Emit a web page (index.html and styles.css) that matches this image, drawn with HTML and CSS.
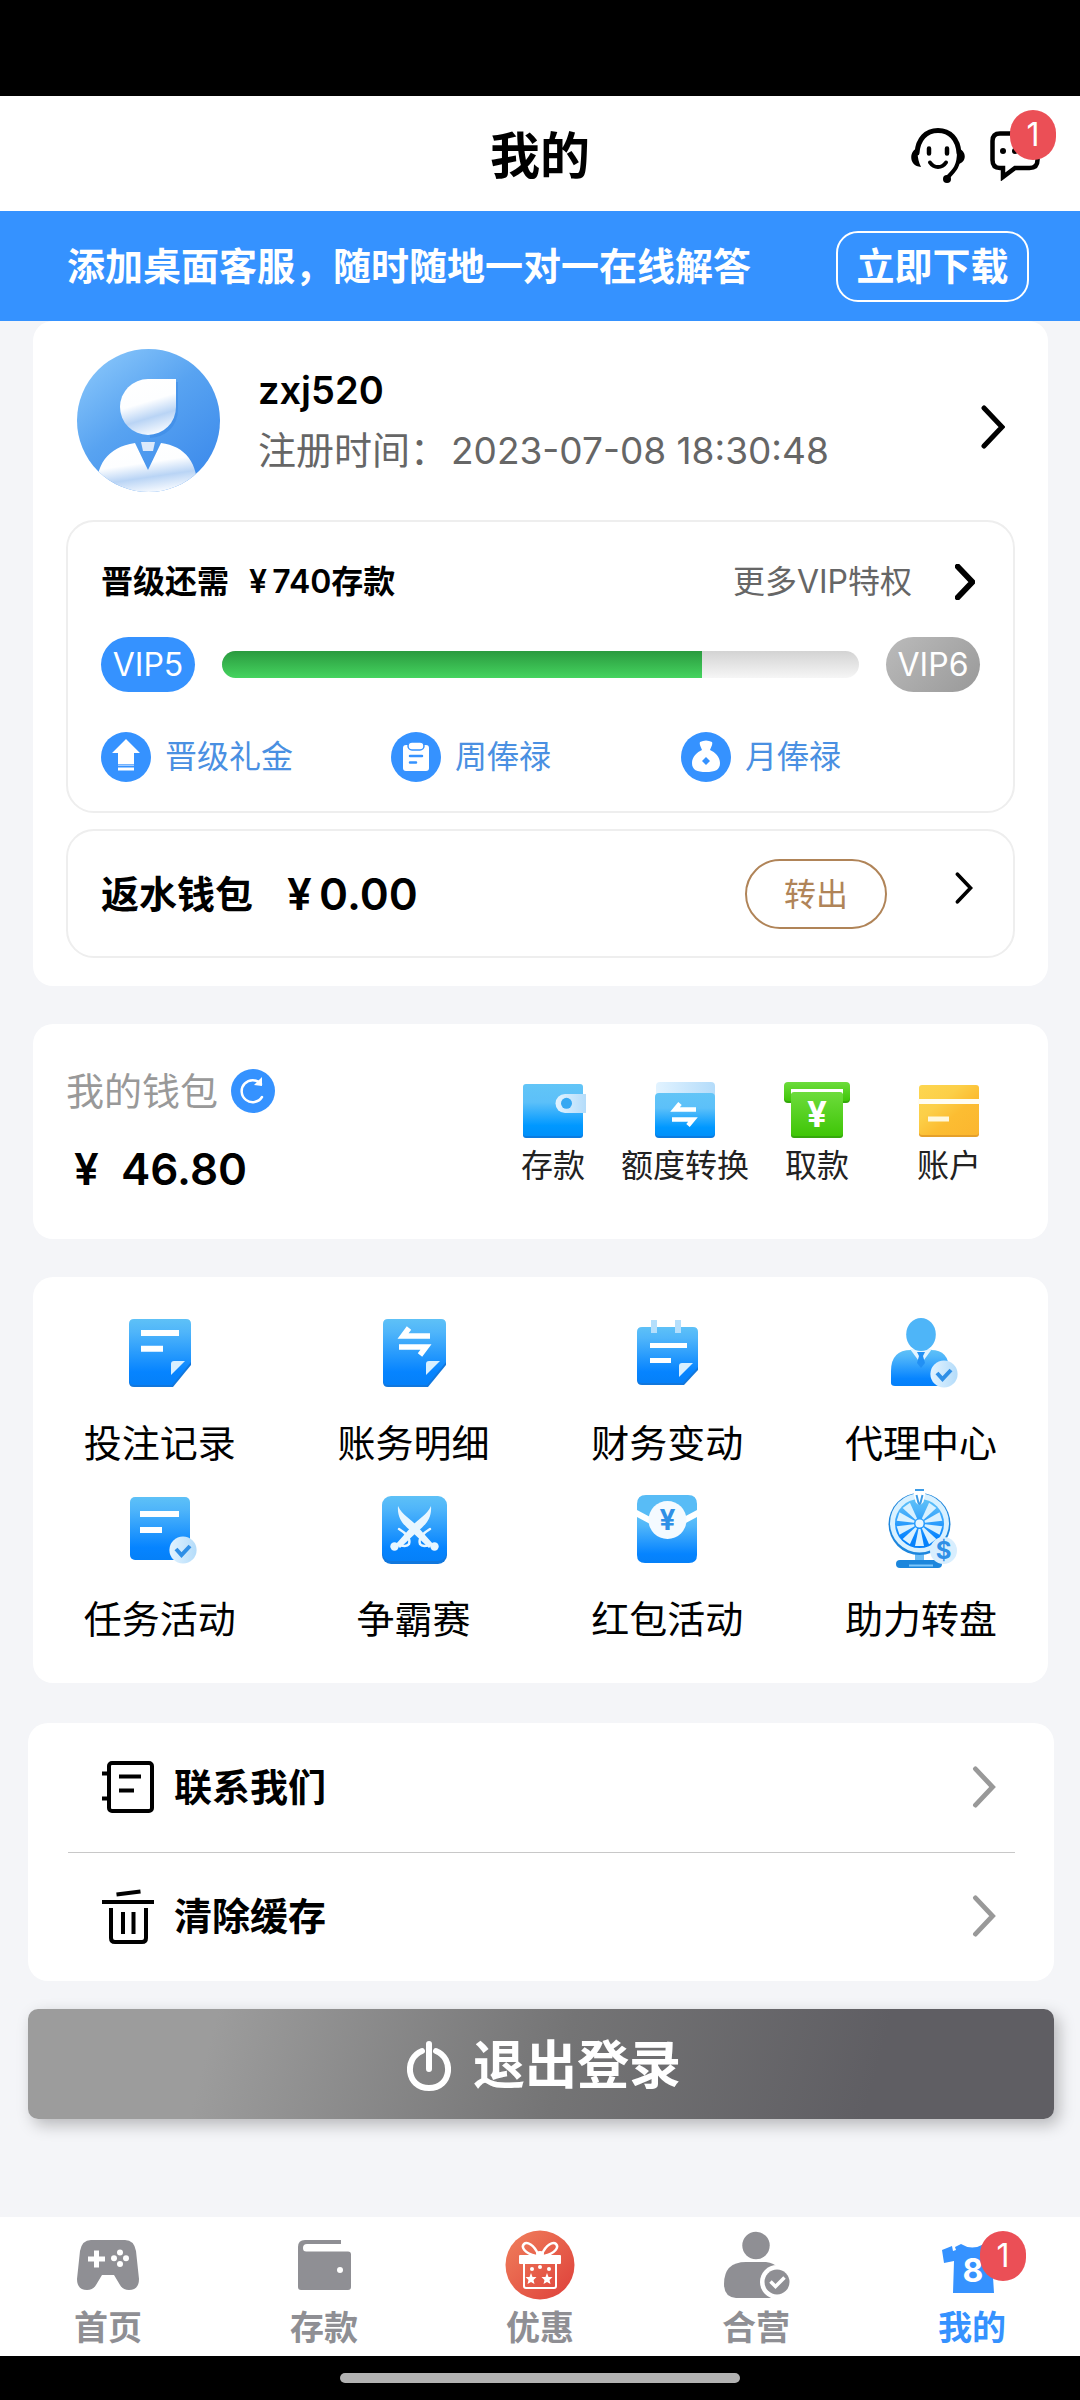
FILE: index.html
```html
<!DOCTYPE html>
<html lang="zh-CN">
  <head>
    <meta charset="UTF-8" />
    <meta name="viewport" content="width=device-width, initial-scale=1" />
    <title>我的</title>
    <link rel="stylesheet" href="styles.css">
  </head>
  <body>
    <!-- shared gradients and symbols -->
    <svg class="defs" width="0" height="0" aria-hidden="true">
      <defs>
        <linearGradient id="blue" x1="0" y1="0" x2="0" y2="1">
          <stop offset="0" stop-color="#5ec1f7" />
          <stop offset="0.2" stop-color="#4fb5fa" />
          <stop offset="0.8" stop-color="#0684ff" />
          <stop offset="1" stop-color="#0580f8" />
        </linearGradient>
        <linearGradient id="sky" x1="0" y1="0" x2="0" y2="1">
          <stop offset="0" stop-color="#62c5f7" />
          <stop offset="0.35" stop-color="#5cc0f9" />
          <stop offset="0.8" stop-color="#0098ff" />
          <stop offset="1" stop-color="#0090fa" />
        </linearGradient>
        <linearGradient id="pale" x1="0" y1="0" x2="1" y2="0">
          <stop offset="0" stop-color="#e2f3ff" />
          <stop offset="1" stop-color="#b4dcfa" />
        </linearGradient>
        <linearGradient id="edge" x1="0" y1="0" x2="1" y2="0">
          <stop offset="0" stop-color="#0a6fd0" />
          <stop offset="0.55" stop-color="#7cc6fb" />
          <stop offset="1" stop-color="#0a6fd0" />
        </linearGradient>
        <linearGradient id="green" x1="0" y1="0" x2="0" y2="1">
          <stop offset="0" stop-color="#6ddc3c" />
          <stop offset="1" stop-color="#3fc607" />
        </linearGradient>
        <linearGradient id="gold" x1="0" y1="0" x2="1" y2="1">
          <stop offset="0" stop-color="#fdd650" />
          <stop offset="0.35" stop-color="#fccf48" />
          <stop offset="0.6" stop-color="#fcbd32" />
          <stop offset="1" stop-color="#fbb62f" />
        </linearGradient>
        <linearGradient id="avatar-bg" x1="0.1" y1="0" x2="0.8" y2="0.9">
          <stop offset="0" stop-color="#8bc8fb" />
          <stop offset="0.5" stop-color="#58a3f1" />
          <stop offset="1" stop-color="#3f8dec" />
        </linearGradient>
        <linearGradient id="shine" x1="0.3" y1="0" x2="0.6" y2="1">
          <stop offset="0" stop-color="#fff" />
          <stop offset="0.42" stop-color="#fdfeff" />
          <stop offset="0.7" stop-color="#b9d4f5" />
          <stop offset="1" stop-color="#f8fbff" />
        </linearGradient>
        <linearGradient id="red" x1="0" y1="0" x2="1" y2="1">
          <stop offset="0" stop-color="#f0805c" />
          <stop offset="1" stop-color="#de3f3a" />
        </linearGradient>
        <symbol id="chevron" viewBox="0 0 24 44">
          <path d="M3 3 21 22 3 41" fill="none" stroke="currentColor" stroke-linecap="round" stroke-linejoin="miter" />
        </symbol>
        <symbol id="tick" viewBox="0 0 28 28">
          <circle cx="14" cy="14" r="13.6" fill="url(#pale)" />
          <path d="m7 13 5.500 6 8.500-9" fill="none" stroke="#2f8fe6" stroke-width="4" />
        </symbol>
      </defs>
    </svg>

    <div class="status-bar"></div>

    <header class="top-bar">
      <h1>我的</h1>
      <div class="top-actions">
        <button class="icon-btn" aria-label="客服">
          <svg width="56" height="56" viewBox="0 0 56 56" fill="none" stroke="#000" stroke-linecap="round">
            <path d="M7 25C8 11 16 2.500 28 2.500S48 11 49 25" stroke-width="5" />
            <path d="M49 24c0 14-4 18-12 26" stroke-width="4" />
            <path d="M8 20C-1 22-2 38 11 39 8 33 7 27 8 20ZM48 20c9 3 9 14 0 16Z" fill="#000" stroke="none" />
            <circle cx="37" cy="51" r="4" fill="#000" stroke="none" />
            <path d="M19 20.500v5M37 20.500v5" stroke-width="4.500" />
            <path d="M20 34.500c4 6 12 6 16 0" stroke-width="4" />
          </svg>
        </button>
        <button class="icon-btn has-badge" aria-label="消息">
          <svg width="50" height="50" viewBox="0 0 50 50">
            <path d="M10 2.500h30q7.500 0 7.500 7.500v19q0 8-8 8H25l-12 9v-9h-3q-7.500 0-7.500-8V10q0-7.500 7.500-7.500Z" fill="none" stroke="#000" stroke-width="4.500" />
            <circle cx="13" cy="20" r="3" /><circle cx="25" cy="20" r="3" /><circle cx="37" cy="20" r="3" />
          </svg>
          <span class="badge">1</span>
        </button>
      </div>
    </header>

    <div class="banner">
      <p>添加桌面客服，随时随地一对一在线解答</p>
      <button class="download-btn">立即下载</button>
    </div>

    <main>
      <section class="card profile-card">
        <a class="profile" href="#">
          <svg class="avatar" viewBox="0 0 143 143">
            <defs><clipPath id="avatar-clip"><circle cx="71.500" cy="71.500" r="71.500" /></clipPath></defs>
            <g clip-path="url(#avatar-clip)">
              <rect width="143" height="143" fill="url(#avatar-bg)" />
              <path d="M73 33h28v28a28 28 0 0 1-28 28" fill="#2f7fe0" opacity=".35" />
              <path d="M71 30h28v28a28 28 0 1 1-28-28Z" fill="url(#shine)" />
              <path d="M20 143c-2-26 10-45 38-49l13 27 13-27c24 3 38 20 36 49Z" fill="url(#shine)" />
              <path d="M64 93h14l-2 9H66Z" fill="#dbe9fb" />
            </g>
          </svg>
          <div class="profile-text">
            <strong>zxj520</strong>
            <span>注册时间：<span class="date">2023-07-08 18:30:48</span></span>
          </div>
          <svg class="chevron chevron-lg"><use href="#chevron" /></svg>
        </a>

        <div class="panel vip">
          <div class="vip-head">
            <strong>晋级还需</strong>
            <strong>¥&thinsp;740存款</strong>
            <a href="#">更多VIP特权</a>
            <svg class="chevron chevron-bold"><use href="#chevron" /></svg>
          </div>
          <div class="vip-level">
            <span class="level">VIP5</span>
            <div class="track"><div class="fill" style="width: 75.4%"></div></div>
            <span class="level level-next">VIP6</span>
          </div>
          <div class="vip-links">
            <a href="#">
              <svg width="50" height="50" viewBox="0 0 50 50">
                <circle cx="25" cy="25" r="25" fill="#3592ff" />
                <path d="m25 7 14 14h-6v11H17V21h-6ZM17 35.500h16v3H17Z" fill="#fff" />
                <path d="M17 33.200h16" stroke="#a9d0ff" stroke-width="1.500" />
              </svg>
              晋级礼金
            </a>
            <a href="#">
              <svg width="50" height="50" viewBox="0 0 50 50">
                <circle cx="25" cy="25" r="25" fill="#3592ff" />
                <rect x="12" y="13" width="26" height="26" rx="3" fill="#fff" />
                <rect x="17" y="10" width="16" height="8" rx="4" fill="#fff" stroke="#3592ff" stroke-width="1.500" />
                <path d="M19 24h12M19 30.500h6" stroke="#3592ff" stroke-width="2.500" stroke-linecap="round" />
              </svg>
              周俸禄
            </a>
            <a href="#">
              <svg width="50" height="50" viewBox="0 0 50 50">
                <circle cx="25" cy="25" r="25" fill="#3592ff" />
                <path d="M19 10c4-2 8-2 12 0 1 3-1 5-2 8 5 2 10 7 10 13 0 7-5 9-14 9s-14-2-14-9c0-6 5-11 10-13-1-3-3-5-2-8Z" fill="#fff" />
                <path d="m25 25 4 4-4 4-4-4Z" fill="#3592ff" />
              </svg>
              月俸禄
            </a>
          </div>
        </div>

        <div class="panel rebate">
          <strong>返水钱包</strong>
          <strong class="money">¥&thinsp;0.00</strong>
          <button class="transfer-btn">转出</button>
          <svg class="chevron chevron-sm"><use href="#chevron" /></svg>
        </div>
      </section>

      <section class="card wallet">
        <div class="wallet-info">
          <div class="wallet-title">
            我的钱包
            <button class="icon-btn" aria-label="刷新">
              <svg width="44" height="44" viewBox="0 0 44 44">
                <circle cx="22" cy="22" r="22" fill="#3592ff" />
                <path d="M31 28a11 11 0 1 1-1-13" fill="none" stroke="#fff" stroke-width="2.500" stroke-linecap="round" />
                <path d="M31 8v9l-8-1Z" fill="#fff" />
              </svg>
            </button>
          </div>
          <strong class="money">¥&nbsp; 46.80</strong>
        </div>
        <nav class="wallet-actions">
          <a href="#">
            <svg width="66" height="60" viewBox="0 0 66 60">
              <rect x="3" y="8" width="60" height="50" rx="3" fill="#0a7be0" />
              <path d="M6 57.300h54" stroke="url(#edge)" stroke-width="2" />
              <rect x="3" y="4" width="60" height="52" rx="3" fill="url(#sky)" />
              <path d="M66 14v19H45a9.500 9.500 0 0 1 0-19Z" fill="url(#pale)" />
              <circle cx="46.500" cy="23.300" r="5.500" fill="#36a8f2" />
            </svg>
            存款
          </a>
          <a href="#">
            <svg width="66" height="60" viewBox="0 0 66 60">
              <rect x="4" y="2" width="59" height="20" rx="4" fill="url(#pale)" />
              <rect x="3" y="20" width="60" height="38" rx="4" fill="#0a7be0" />
              <rect x="3" y="13" width="60" height="43" rx="4" fill="url(#sky)" />
              <path d="M44 29.500H23l5-6M20 39.500h21l-5 6" fill="none" stroke="#fff" stroke-width="4.500" />
            </svg>
            额度转换
          </a>
          <a href="#">
            <svg width="66" height="60" viewBox="0 0 66 60">
              <rect x="0" y="4" width="66" height="19" rx="4" fill="#35a80b" />
              <rect x="0" y="2" width="66" height="19" rx="4" fill="url(#green)" />
              <path d="M7 9h52v5H7Z" fill="#fff" />
              <rect x="7" y="20" width="52" height="38" rx="3" fill="#35a80b" />
              <rect x="7" y="12" width="52" height="44" rx="3" fill="url(#green)" />
              <text x="33" y="47" class="icon-text" font-size="35">¥</text>
            </svg>
            取款
          </a>
          <a href="#">
            <svg width="66" height="60" viewBox="0 0 66 60">
              <rect x="3" y="10" width="60" height="47" rx="3" fill="#e5a02a" />
              <rect x="3" y="5" width="60" height="50" rx="3" fill="url(#gold)" />
              <path d="M2 19h62v5H2Z" fill="#fffdf2" />
              <path d="M12 36.500h21v5H12Z" fill="#fff8dc" />
            </svg>
            账户
          </a>
        </nav>
      </section>

      <nav class="card features">
        <a href="#">
          <svg viewBox="0 0 80 80">
            <path d="M9 20h62v33L53 75H14q-5 0-5-5Z" fill="#1177dd" />
            <path d="M14 7h52q5 0 5 5v38L52 73H14q-5 0-5-5V12q0-5 5-5Z" fill="url(#blue)" />
            <path d="M14 73.800h38" stroke="url(#edge)" stroke-width="2" />
            <path d="M21 21h38M21 36.800h22" stroke="#fff" stroke-width="6" />
            <path d="M54 49h11L51 63V52q0-3 3-3Z" fill="#d9f0ff" />
          </svg>
          投注记录
        </a>
        <a href="#">
          <svg viewBox="0 0 80 80">
            <path d="M9 20h63v33L54 75H14q-5 0-5-5Z" fill="#1177dd" />
            <path d="M14 7h53q5 0 5 5v38L53 73H14q-5 0-5-5V12q0-5 5-5Z" fill="url(#blue)" />
            <path d="M14 73.800h38" stroke="url(#edge)" stroke-width="2" />
            <path d="M56 24H29l6-8M25 35h27l-6 8" fill="none" stroke="#fff" stroke-width="5.500" />
            <path d="M55 49h11L52 63V52q0-3 3-3Z" fill="#d9f0ff" />
          </svg>
          账务明细
        </a>
        <a href="#">
          <svg viewBox="0 0 80 80">
            <path d="M10 25h61v33L57 73H15q-5 0-5-5Z" fill="#1177dd" />
            <path d="M15 15h51q5 0 5 5v35L56 71H15q-5 0-5-5V20q0-5 5-5Z" fill="url(#blue)" />
            <path d="M15 71.800h41" stroke="url(#edge)" stroke-width="2" />
            <path d="M24 8h6v13h-6ZM48 8h6v13h-6Z" fill="#b5dffc" />
            <path d="M23 33.500h37M23 48.500h21" stroke="#fff" stroke-width="5" />
            <path d="M55 51h11L52 65V54q0-3 3-3Z" fill="#d9f0ff" />
          </svg>
          财务变动
        </a>
        <a href="#">
          <svg viewBox="0 0 80 80">
            <path d="M10 71V59q0-21 20-21h20q18 0 18 20v16H14q-4 0-4-3Z" fill="url(#blue)" />
            <path d="M14 73h38" stroke="url(#edge)" stroke-width="2" />
            <path d="m29 37 11 15 11-15Z" fill="#e4f4ff" />
            <path d="M36 40h8l-2 4 2 7-4 5-4-5 2-7Z" fill="#2290f4" />
            <ellipse cx="40" cy="22.500" rx="14.800" ry="16.500" fill="#4eb5f8" />
            <use href="#tick" x="49" y="48" width="28" height="28" />
          </svg>
          代理中心
        </a>
        <a href="#">
          <svg viewBox="0 0 80 80">
            <rect x="10" y="9" width="60" height="63" rx="5" fill="url(#blue)" />
            <path d="M14 71.500h40" stroke="url(#edge)" stroke-width="2" />
            <path d="M20 26h39M20 42h22" stroke="#fff" stroke-width="6" />
            <use href="#tick" x="49" y="48" width="28" height="28" />
          </svg>
          任务活动
        </a>
        <a href="#">
          <svg viewBox="0 0 80 80">
            <rect x="8" y="12" width="65" height="64" rx="9" fill="#1177dd" />
            <rect x="8" y="8" width="65" height="65" rx="9" fill="url(#blue)" />
            <path d="M18 74.800h45" stroke="url(#edge)" stroke-width="2" />
            <g fill="#e8f6ff">
              <path d="M24 18c-1 13 6 19 13 25l18 17 4-4-16-18C37 31 28 27 24 18Z" />
              <path d="M57 18c1 13-6 19-13 25L26 60l-4-4 16-18c6-7 15-11 19-20Z" />
              <circle cx="20.500" cy="58.500" r="4.200" /><circle cx="60.500" cy="58.500" r="4.200" />
              <path d="M25 41c7 4 12 10 10 15-2 3-6 2-9 1M56 41c-7 4-12 10-10 15 2 3 6 2 9 1" fill="none" stroke="#e8f6ff" stroke-width="2.500" stroke-linecap="round" />
            </g>
          </svg>
          争霸赛
        </a>
        <a href="#">
          <svg viewBox="0 0 80 80">
            <path d="M19 7h42q9 0 9 9v6L40 38 10 22v-6q0-9 9-9Z" fill="#58bcf6" />
            <path d="m10 29 30 16 30-16v38q0 8-8 8H18q-8 0-8-8Z" fill="url(#blue)" />
            <path d="M20 74h40" stroke="url(#edge)" stroke-width="2" />
            <circle cx="40.500" cy="32" r="19" fill="#f4faff" />
            <text x="40.500" y="42" class="icon-text icon-text-blue" font-size="28">¥</text>
          </svg>
          红包活动
        </a>
        <a href="#">
          <svg viewBox="0 0 80 80">
            <path d="M34 66h9v8h-9Z" fill="#6dbdf5" />
            <rect x="15" y="72" width="46" height="8" rx="4" fill="#1c86dc" />
            <path d="M28 77.500h24" stroke="#7cc6fb" stroke-width="2" />
            <circle cx="38.500" cy="36" r="31" fill="#1d86dd" />
            <circle cx="38.500" cy="35" r="29.500" fill="#d9f1ff" />
            <circle cx="38.500" cy="35.500" r="24.500" fill="url(#blue)" />
            <!-- wheel wedges -->
            <g fill="#d9f1ff">
              <path id="wedge" d="m37.500 41-3.500 17h9l-3.500-17Z" />
              <use href="#wedge" transform="rotate(36 38.500 35.500)" />
              <use href="#wedge" transform="rotate(72 38.500 35.500)" />
              <use href="#wedge" transform="rotate(108 38.500 35.500)" />
              <use href="#wedge" transform="rotate(144 38.500 35.500)" />
              <use href="#wedge" transform="rotate(216 38.500 35.500)" />
              <use href="#wedge" transform="rotate(252 38.500 35.500)" />
              <use href="#wedge" transform="rotate(288 38.500 35.500)" />
              <use href="#wedge" transform="rotate(324 38.500 35.500)" />
            </g>
            <circle cx="38.500" cy="35.500" r="4" fill="#e8f6ff" />
            <path d="M32 2h13l-2.500 12q-4 6-8 0Z" fill="#fff" />
            <path d="M34 2h9M35.500 7l2 8q1 2 2 0l2-8" fill="none" stroke="#3c9be6" stroke-width="2" />
            <circle cx="62.500" cy="62.500" r="13.500" fill="#d8eefe" />
            <text x="62.500" y="71" class="icon-text icon-text-blue" font-size="24">$</text>
          </svg>
          助力转盘
        </a>
      </nav>

      <nav class="card menu">
        <a href="#">
          <svg width="52" height="52" viewBox="0 0 52 52" fill="none" stroke="#000" stroke-width="4">
            <rect x="7" y="2" width="43" height="48" rx="3" />
            <path d="M0 12.500h7M0 37.500h7M17 15.500h22M17 29.500h15" />
          </svg>
          联系我们
          <svg class="chevron chevron-md"><use href="#chevron" /></svg>
        </a>
        <a href="#">
          <svg width="52" height="56" viewBox="0 0 52 56" fill="none" stroke="#000" stroke-width="4">
            <path d="M0 14h52M14.500 6.500l24-3M9 20v30q0 4 4 4h27q4 0 4-4V20M21 24v22M31.500 24v22" />
          </svg>
          清除缓存
          <svg class="chevron chevron-md"><use href="#chevron" /></svg>
        </a>
      </nav>

      <button class="logout-btn">
        <svg width="44" height="50" viewBox="0 0 44 50" fill="none" stroke="#fff" stroke-width="6" stroke-linecap="round">
          <path d="M15 10C-3 17-1 47 22 47S47 17 29 10M22 3v25" />
        </svg>
        退出登录
      </button>
    </main>

    <nav class="tab-bar">
      <a href="#">
        <svg viewBox="0 0 70 70" fill="#8f8f94">
          <path d="M18 10h34q9 0 11 11l3 28q0 11-10 11-6 0-9-5l-6-10H29l-6 10q-3 5-9 5-10 0-10-11l3-28q2-11 11-11Z" />
          <path d="M21 20.500h5v6h6v5h-6v6h-5v-6h-6v-5h6Z" fill="#fff" />
          <g fill="#fff"><circle cx="47" cy="22.500" r="3" /><circle cx="47" cy="34" r="3" /><circle cx="41" cy="28.300" r="3" /><circle cx="53" cy="28.300" r="3" /></g>
        </svg>
        首页
      </a>
      <a href="#">
        <svg viewBox="0 0 70 70" fill="#8f8f94">
          <path d="M16 10h36v4H18q-4 0-4 4t4 3.500h41q3 0 3 3V57q0 3-3 3H12q-3 0-3-3V17q0-7 7-7Z" />
          <circle cx="51" cy="40" r="3" fill="#fff" />
        </svg>
        存款
      </a>
      <a href="#">
        <svg viewBox="0 0 70 70">
          <circle cx="35" cy="35" r="34.500" fill="url(#red)" />
          <g fill="none" stroke="#fff" stroke-width="2" stroke-linejoin="round">
            <path d="M19 34v22q0 2 2 2h28q2 0 2-2V34" />
            <path d="M33 24c-4-9-11-13-14-10s0 9 12 12M37 24c4-9 11-13 14-10s0 9-12 12" stroke-width="2.500" />
          </g>
          <rect x="14" y="25" width="42" height="9" rx="1" fill="#fff" />
          <ellipse cx="35" cy="24" rx="4" ry="3" fill="#fff" />
          <g fill="#fff">
            <path d="m26 43 1.500 4h4l-3 3 1 4-3.500-2-3.500 2 1-4-3-3h4ZM42 43l1.500 4h4l-3 3 1 4-3.500-2-3.500 2 1-4-3-3h4Z" />
            <circle cx="27" cy="39" r="2" /><circle cx="44" cy="39" r="2" /><circle cx="35" cy="37" r="2" />
          </g>
        </svg>
        优惠
      </a>
      <a href="#">
        <svg viewBox="0 0 70 70" fill="#8f8f94">
          <circle cx="35" cy="15.500" r="13.700" />
          <path d="M3 54q0-22 22-22h20q16 2 19 20L50 68H15Q3 67 3 54Z" />
          <circle cx="56" cy="52" r="17" fill="#fff" />
          <circle cx="56" cy="52" r="12.500" />
          <path d="m49.500 51.500 5 5 9-9" fill="none" stroke="#fff" stroke-width="3.500" />
        </svg>
        合营
      </a>
      <a class="active" href="#">
        <span class="has-badge">
          <svg viewBox="0 0 70 70" fill="#3592ff">
            <path d="m5 20 10-4 1 5 3-1-1-3 6-3q11 7 23 0l18 6-3 12-7-1 2 32H16l1-32-10 2Z" />
            <text x="36" y="52" class="icon-text" font-size="32">8</text>
          </svg>
          <span class="badge">1</span>
        </span>
        我的
      </a>
    </nav>

    <div class="home-indicator"><span></span></div>
  </body>
</html>
```

FILE: styles.css
```css
* {
  box-sizing: border-box;
}

body {
  font-family: Inter, "Noto Sans CJK SC", sans-serif;
  background: #f4f5f8;
  color: #000;
  margin: 0;
  min-height: 100vh;
  display: flex;
  flex-direction: column;
  font-size: 32px;
  line-height: 44px;
}

a {
  color: inherit;
  text-decoration: none;
}

button {
  font-family: inherit;
  padding: 0;
  border: none;
  background: none;
  cursor: pointer;
}

svg {
  display: block;
  flex: none;
}

strong {
  font-weight: 600;
}

.defs {
  position: absolute;
}

.status-bar {
  height: 96px;
  background: #000;
}

/* header */
.top-bar {
  background: #fff;
  height: 115px;
  padding: 4px 40px 0;
  display: grid;
  grid-template-columns: 1fr auto 1fr;
  align-items: center;
}

.top-bar h1 {
  grid-column: 2;
  margin: 0;
  font-size: 50px;
  line-height: 72px;
  font-weight: 600;
}

.top-actions {
  display: flex;
  justify-content: flex-end;
  align-items: center;
  gap: 24px;
}

.has-badge {
  position: relative;
}

.badge {
  position: absolute;
  top: -21px;
  right: -16px;
  width: 46px;
  height: 50px;
  border-radius: 25px;
  background: #eb4f56;
  color: #fff;
  font-size: 32px;
  line-height: 50px;
  font-weight: 400;
  text-align: center;
}

.banner {
  background: #3592ff;
  color: #fff;
  min-height: 110px;
  padding: 0 51px 0 67px;
  display: flex;
  justify-content: space-between;
  align-items: center;
  font-size: 38px;
  font-weight: 600;
}

.banner p {
  margin: 0;
}

.download-btn {
  width: 193px;
  height: 71px;
  padding-bottom: 6px;
  border: 2px solid #fff;
  border-radius: 22px;
  color: #fff;
  font-size: 38px;
  font-weight: 600;
}

/* cards */
main {
  flex: 1;
}

.card {
  background: #fff;
  border-radius: 20px;
  margin: 0 32px 38px 33px;
}

.profile-card {
  padding: 0 33px 28px;
}

.panel {
  border: 2px solid #eee;
  border-radius: 28px;
  padding: 0 33px;
}

.chevron {
  width: 24px;
  height: 44px;
  stroke-width: 5px;
}

.chevron-lg {
  margin-top: 12px;
}

.chevron-bold {
  width: 20px;
  height: 36px;
  stroke-width: 7px;
}

.chevron-sm {
  width: 18px;
  height: 32px;
  margin-bottom: 12px;
}

.chevron-md {
  height: 42px;
  color: #999;
}

.profile {
  display: flex;
  align-items: center;
  padding: 28px 10px 28px 11px;
}

.avatar {
  width: 143px;
  height: 143px;
}

.profile-text {
  flex: 1;
  display: flex;
  flex-direction: column;
  padding-left: 38px;
  font-size: 38px;
  line-height: 60px;
  color: #666;
}

.profile-text strong {
  color: #000;
}

.date {
  margin-left: 3px;
  font-size: 37px;
}

/* vip */
.vip {
  padding-top: 36px;
  padding-bottom: 29px;
}

.vip-head {
  display: flex;
  align-items: center;
  line-height: 48px;
  padding-right: 5px;
  gap: 20px;
}

.vip-head a {
  margin-left: auto;
  margin-right: 23px;
  color: #666;
}

.vip-level {
  display: flex;
  align-items: center;
  gap: 27px;
  margin: 31px 0 40px;
}

.level {
  width: 94px;
  border-radius: 28px;
  background: #3592ff;
  color: #fff;
  line-height: 55px;
  text-align: center;
}

.level-next {
  background: linear-gradient(135deg, #bbb, #999);
}

.track {
  flex: 1;
  height: 27px;
  border-radius: 14px;
  overflow: hidden;
  background: linear-gradient(#d3d3d3, #f6f6f6);
}

.fill {
  height: 100%;
  background: linear-gradient(#2a9a3f, #45d45f);
}

.vip-links {
  display: grid;
  grid-template-columns: repeat(3, 1fr);
  padding-right: 9px;
}

.vip-links a {
  display: flex;
  align-items: center;
  gap: 14px;
  color: #4a90e2;
}

.rebate {
  display: flex;
  align-items: center;
  height: 129px;
  margin-top: 16px;
  padding-right: 40px;
  font-size: 38px;
}

.rebate .money {
  margin-left: 34px;
}

.money {
  font-size: 44px;
}

.transfer-btn {
  width: 142px;
  height: 70px;
  padding-bottom: 4px;
  margin-left: auto;
  margin-right: 68px;
  border: 2px solid #b08458;
  border-radius: 35px;
  color: #b08458;
  font-size: 32px;
}

/* wallet */
.wallet {
  display: flex;
  justify-content: space-between;
  align-items: center;
  min-height: 215px;
  padding: 0 33px;
}

.wallet-title {
  display: flex;
  align-items: center;
  gap: 13px;
  color: #999;
  font-size: 38px;
  line-height: 58px;
}

.wallet-info .money {
  display: block;
  margin: 20px 0 4px 8px;
  line-height: 58px;
}

.wallet-actions {
  display: grid;
  grid-template-columns: repeat(4, 132px);
  padding-top: 4px;
  color: #222;
}

.wallet-actions a {
  display: flex;
  flex-direction: column;
  align-items: center;
  gap: 4px;
}

/* feature grid */
.features {
  display: grid;
  grid-template-columns: repeat(4, 1fr);
  row-gap: 18px;
  padding: 35px 0 37px;
  margin-bottom: 40px;
}

.features a {
  display: flex;
  flex-direction: column;
  align-items: center;
  gap: 24px;
  font-size: 38px;
  line-height: 54px;
}

.features svg {
  width: 80px;
  height: 80px;
}

.icon-text {
  font-weight: 700;
  text-anchor: middle;
  fill: #fff;
}

.icon-text-blue {
  fill: #2f8fe6;
}

/* menu */
.menu {
  margin: 0 26px 28px 28px;
  padding: 0 39px 0 40px;
}

.menu a {
  display: flex;
  align-items: center;
  gap: 20px;
  height: 129px;
  padding: 0 19px 2px 34px;
  font-size: 38px;
  font-weight: 600;
}

.menu a + a {
  border-top: 1px solid #c8c8c8;
}

.menu .chevron {
  margin-left: auto;
}

.logout-btn {
  display: flex;
  justify-content: center;
  align-items: center;
  gap: 22px;
  width: calc(100% - 54px);
  height: 110px;
  padding: 0 0 6px 6px;
  margin: 0 26px 0 28px;
  border-radius: 10px;
  background: linear-gradient(105deg, #9c9c9c 18%, #747475 52%, #5f5e63 82%);
  box-shadow: 5px 6px 16px rgba(0, 0, 0, 0.25);
  color: #fff;
  font-size: 52px;
  font-weight: 600;
}

.logout-btn svg {
  margin-top: 10px;
}

/* bottom tabs */
.tab-bar {
  background: #fff;
  height: 139px;
  padding-top: 13px;
  display: grid;
  grid-template-columns: repeat(5, 1fr);
  color: #8f8f94;
}

.tab-bar a {
  display: flex;
  flex-direction: column;
  align-items: center;
  gap: 6px;
  font-size: 34px;
  font-weight: 600;
}

.tab-bar svg {
  width: 70px;
  height: 70px;
}

.tab-bar .active {
  color: #3592ff;
}

.tab-bar .badge {
  top: 1px;
  right: -19px;
}

.home-indicator {
  background: #000;
  height: 44px;
  display: flex;
  justify-content: center;
  align-items: center;
}

.home-indicator span {
  width: 400px;
  height: 10px;
  border-radius: 5px;
  background: #b2b2b2;
}
```
